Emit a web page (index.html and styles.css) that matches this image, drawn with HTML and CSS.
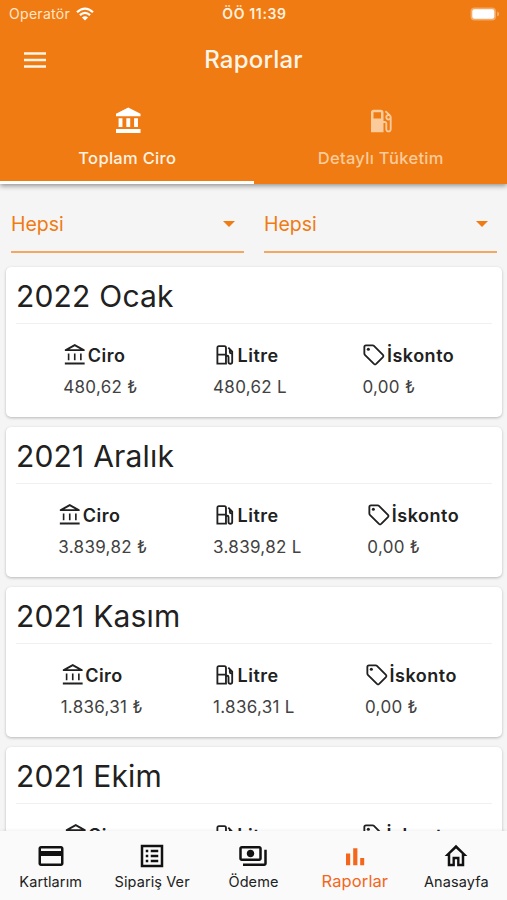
FILE: index.html
```html
<!DOCTYPE html>
<html lang="tr">
<head>
<meta charset="utf-8">
<title>Raporlar</title>
<link rel="stylesheet" href="styles.css">
</head>
<body>
<svg class="defs" aria-hidden="true">
  <symbol id="bank" viewBox="0 0 24 24"><path d="M6.300 10.300H4.700v6.500h1.600zM12.300 10.300h-1.600v6.500h1.600zM18.300 10.300h-1.600v6.500h1.600zM21.200 19.100H1.800v1.900h19.400zM11.500 3.300L16.800 6.200H6.200zM11.500 1.100L1.800 6.400v1.500h19.400V6.400z" fill-rule="evenodd"/></symbol>
  <symbol id="pump" viewBox="0 0 24 24"><path d="M4.300 20.200V4.600Q4.300 3 5.800 3h5.400q1.500 0 1.500 1.600v15.600zM4.300 11.400h8.400M12.700 12.500h1.200q1.300 0 1.300 1.300v4.700q0 1.800 1.800 1.800t1.800-1.800V8.500l-3.800-4M19 10.200h-1.200q-1.300 0-1.300-1.300V6.500" fill="none" stroke="currentColor" stroke-width="1.800"/></symbol>
  <symbol id="tag" viewBox="0 0 24 24"><path d="M2.300 4v6.400q0 .7.500 1.200l8.900 8.900q1.100 1 2.200 0l6.600-6.600q1-1.100 0-2.200L11.700 2.800q-.5-.5-1.200-.5H3.900Q2.300 2.300 2.300 4z" fill="none" stroke="currentColor" stroke-width="1.800"/><circle cx="6.200" cy="6.200" r="1.500"/></symbol>
</svg>
<div class="app">
  <header class="header">
    <div class="status">
      <span class="carrier">Operatör
        <svg class="wifi" viewBox="0 0 18 14"><path d="M1 5.300Q9-2.200 17 5.300M3.900 8.100q5.100-4.600 10.200 0" fill="none" stroke="currentColor" stroke-width="2.200"/><path d="M5.900 10.400q3.100-2.500 6.200 0L9 13.500z"/></svg>
      </span>
      <span class="clock">ÖÖ 11:39</span>
      <svg class="battery" viewBox="0 0 30 14"><rect x=".5" y=".5" width="25.500" height="13" rx="4" opacity=".35"/><rect x="2.300" y="2.300" width="22" height="9.400" rx="2.200"/><path d="M27.200 4.500q2 .8 2 2.500t-2 2.500z" opacity=".4"/></svg>
    </div>
    <div class="bar">
      <svg class="menu" viewBox="0 0 24 16"><path d="M1 1.500h22M1 8h22M1 14.500h22" stroke="currentColor" stroke-width="2.700"/></svg>
      <h1>Raporlar</h1>
    </div>
    <nav class="tabs">
      <a class="tab active">
        <svg viewBox="-.900 0 24 24"><path d="M4 9.500v6.700h3V9.500zM10 9.500v6.700h3V9.500zM16 9.500v6.700h3V9.500zM2 20.900h19v-3H2zM11.500 1.100L2 6v1.900h19V6z"/></svg>
        <span>Toplam Ciro</span>
      </a>
      <a class="tab">
        <svg viewBox="0 0 24 24"><path d="M19.770 7.230l.01-.01-3.720-3.720L15 4.560l2.110 2.110c-.94.36-1.610 1.260-1.610 2.330 0 1.380 1.120 2.500 2.500 2.500.36 0 .69-.08 1-.21v7.210c0 .55-.45 1-1 1s-1-.45-1-1V14c0-1.100-.9-2-2-2h-1V5c0-1.100-.9-2-2-2H6c-1.100 0-2 .9-2 2v16h10v-7.500h1.500v5c0 1.380 1.120 2.500 2.500 2.500s2.500-1.120 2.500-2.500V9c0-.69-.28-1.320-.73-1.770zM12 10H6V5h6v5zm6 0c-.55 0-1-.45-1-1s.45-1 1-1 1 .45 1 1-.45 1-1 1z"/></svg>
        <span>Detaylı Tüketim</span>
      </a>
    </nav>
  </header>
  <main class="content">
    <div class="filters">
      <div class="select">Hepsi<i></i></div>
      <div class="select">Hepsi<i></i></div>
    </div>
    <section class="card">
      <h2>2022 Ocak</h2>
      <div class="stats">
        <div class="stat"><b><svg><use href="#bank"/></svg>Ciro</b><span>480,62 ₺</span></div>
        <div class="stat"><b><svg><use href="#pump"/></svg>Litre</b><span>480,62 L</span></div>
        <div class="stat"><b><svg><use href="#tag"/></svg>İskonto</b><span>0,00 ₺</span></div>
      </div>
    </section>
    <section class="card">
      <h2>2021 Aralık</h2>
      <div class="stats">
        <div class="stat"><b><svg><use href="#bank"/></svg>Ciro</b><span>3.839,82 ₺</span></div>
        <div class="stat"><b><svg><use href="#pump"/></svg>Litre</b><span>3.839,82 L</span></div>
        <div class="stat"><b><svg><use href="#tag"/></svg>İskonto</b><span>0,00 ₺</span></div>
      </div>
    </section>
    <section class="card">
      <h2>2021 Kasım</h2>
      <div class="stats">
        <div class="stat"><b><svg><use href="#bank"/></svg>Ciro</b><span>1.836,31 ₺</span></div>
        <div class="stat"><b><svg><use href="#pump"/></svg>Litre</b><span>1.836,31 L</span></div>
        <div class="stat"><b><svg><use href="#tag"/></svg>İskonto</b><span>0,00 ₺</span></div>
      </div>
    </section>
    <section class="card">
      <h2>2021 Ekim</h2>
      <div class="stats compact">
        <div class="stat"><b><svg><use href="#bank"/></svg>Ciro</b></div>
        <div class="stat"><b><svg><use href="#pump"/></svg>Litre</b></div>
        <div class="stat"><b><svg><use href="#tag"/></svg>İskonto</b></div>
      </div>
    </section>
  </main>
  <nav class="bottom">
    <a><svg viewBox="0 0 24 24"><path d="M20 4H4c-1.110 0-1.990.89-1.990 2L2 18c0 1.110.89 2 2 2h16c1.110 0 2-.89 2-2V6c0-1.110-.89-2-2-2zm0 14H4v-6h16v6zm0-10H4V6h16v2z"/></svg><span>Kartlarım</span></a>
    <a><svg viewBox="0 0 24 24"><path d="M3 3v18h18V3zm16 16H5V5h14zM11 7h6v2h-6zm0 4h6v2h-6zm0 4h6v2h-6zM7 7h2v2H7zm0 4h2v2H7zm0 4h2v2H7z" fill-rule="evenodd"/></svg><span>Sipariş Ver</span></a>
    <a><svg viewBox="0 0 24 24"><path d="M19 14V6c0-1.100-.9-2-2-2H3c-1.100 0-2 .9-2 2v8c0 1.100.9 2 2 2h14c1.100 0 2-.9 2-2zm-2 0H3V6h14v8zm-7-7c-1.660 0-3 1.340-3 3s1.340 3 3 3 3-1.340 3-3-1.340-3-3-3zm13 0v11c0 1.100-.9 2-2 2H4v-2h17V7h2z"/></svg><span>Ödeme</span></a>
    <a class="current"><svg viewBox="0 0 30 30"><path d="M6 12.500h4.200v11.800H6zM13.200 7.300h4.200v17h-4.200zM20.200 17h4v7.300h-4z"/></svg><span>Raporlar</span></a>
    <a><svg viewBox="0 0 24 24"><path d="M12 5.900l4.600 4.200V18.200h-1.800V12.500H9.200v5.700H7.400V10.100L12 5.900M12 3L2.900 11.900h2.500V20.200h5.700v-5.700h1.800v5.700h5.700V11.900h2.500L12 3z"/></svg><span>Anasayfa</span></a>
  </nav>
</div>
</body>
</html>
```
FILE: styles.css
```css
* { box-sizing: border-box; }
body { margin: 0; font-family: Inter, Roboto, sans-serif; color: #212121; background: #f5f5f5; }
svg { fill: currentColor; display: block; flex: none; }
.defs { position: absolute; width: 0; height: 0; }
.app { height: 900px; display: flex; flex-direction: column; overflow: hidden; }

.header { flex: none; height: 184px; background: #ef7b12; color: #fff; z-index: 1; box-shadow: 0 2px 5px rgba(0,0,0,.4); display: flex; flex-direction: column; }
.status { height: 27px; display: grid; grid-template-columns: 1fr auto 1fr; align-items: center; padding: 0 7px 0 9px; }
.carrier { display: flex; align-items: center; gap: 6px; font-size: 14px; letter-spacing: .3px; color: #ffe6cb; }
.wifi { width: 18px; height: 14px; color: #fff; }
.clock { font-size: 14px; font-weight: 600; letter-spacing: .65px; color: #fff0df; }
.battery { width: 30px; height: 14px; justify-self: end; }
.bar { height: 66px; display: grid; grid-template-columns: 1fr auto 1fr; align-items: center; padding: 0 23px; color: #fff5e8; }
.menu { width: 24px; height: 16px; }
h1 { margin: 0; font-size: 24px; font-weight: 550; letter-spacing: .2px; line-height: 30px; }
.tabs { flex: 1; display: flex; }
.tab { flex: 1; display: flex; flex-direction: column; align-items: center; padding: 13px 0 0 1px; font-size: 16.500px; font-weight: 500; letter-spacing: .3px; color: #fff3e2; border-bottom: 3px solid transparent; }
.tab svg { width: 31.500px; height: 31px; color: #fff; }
.tab span { margin-top: 11px; line-height: 20px; }
.tab.active { border-color: #fff; }
.tab:not(.active), .tab:not(.active) svg { color: #fbcb9b; }
.tab:not(.active) svg { width: 30px; height: 30px; margin-bottom: 1px; }

.content { flex: 1; min-height: 0; overflow: hidden; padding: 16px 5px 0 6px; }
.filters { display: grid; grid-template-columns: 1fr 1fr; gap: 20px; padding: 0 5px; height: 53px; }
.select { display: flex; justify-content: space-between; align-items: center; padding: 0 9px 3px 0; font-size: 19.500px; color: #ef7b12; border-bottom: 2px solid #f4a763; }
.select i { border: 6px solid transparent; border-top-color: #ef7b12; border-bottom: 0; }
.card { height: 150px; margin-bottom: 10px; background: #fff; border-radius: 5px; box-shadow: 0 1px 3px rgba(0,0,0,.25); padding: 0 10px; }
.filters + .card { margin-top: 14px; }
h2 { margin: 0; height: 57px; line-height: 58px; font-size: 30px; font-weight: 370; letter-spacing: .2px; border-bottom: 1px solid #f0f0f0; }
.stats { display: flex; justify-content: space-around; padding: 19px 0 0 9.500px; }
.compact .stat { min-width: 73px; }
.stat { display: flex; flex-direction: column; }
.stat b { display: flex; align-items: center; height: 24px; font-size: 18px; font-weight: 600; letter-spacing: .5px; }
.stat b svg { width: 24.500px; height: 24.500px; }
.stat span { margin-top: 10px; line-height: 20px; font-size: 17px; color: #424242; letter-spacing: .3px; }

.bottom { flex: none; height: 69px; z-index: 1; background: #fafafa; display: grid; grid-template-columns: repeat(5, 1fr); box-shadow: 0 -1px 3px rgba(0,0,0,.06); }
.bottom a { display: flex; flex-direction: column; align-items: center; padding-top: 10px; font-size: 14.500px; letter-spacing: .1px; }
.bottom svg { width: 30px; height: 30px; color: #111; }
.bottom span { margin-top: 2px; line-height: 18px; }
.bottom .current, .bottom .current svg { color: #f4661b; }
.bottom .current { font-size: 16.500px; }
.bottom .current span { margin-top: 1px; }
```
